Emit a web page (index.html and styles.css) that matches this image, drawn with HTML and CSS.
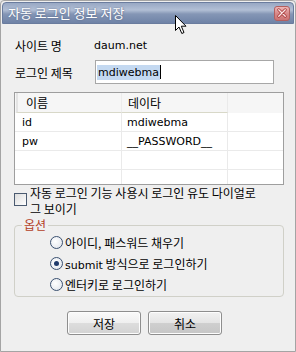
FILE: index.html
```html
<!DOCTYPE html>
<html>
<head>
<meta charset="utf-8">
<link rel="stylesheet" href="styles.css">
</head>
<body>
<div class="window">
  <div class="titlebar">
    <span class="title">자동 로그인 정보 저장</span>
    <span class="close">
      <svg width="15" height="14" viewBox="0 0 15 14"><path d="M4 3.5 L11 10.5 M11 3.5 L4 10.5" stroke="#a83a3a" stroke-width="3.2" stroke-linecap="round"/><path d="M4 3.5 L11 10.5 M11 3.5 L4 10.5" stroke="#fbe6e6" stroke-width="1.4" stroke-linecap="round"/></svg>
    </span>
  </div>
  <div class="content">
    <div class="row row-site">
      <span class="label">사이트 명</span>
      <span class="value">daum.net</span>
    </div>
    <div class="row row-title">
      <span class="label">로그인 제목</span>
      <div class="input"><span class="sel">mdiwebma</span><span class="caret"></span></div>
    </div>
    <div class="list">
      <div class="lrow head">
        <div class="c1"><span>이름</span></div>
        <div class="c2"><span>데이타</span></div>
        <div class="c3"></div>
      </div>
      <div class="lrow">
        <div class="c1">id</div>
        <div class="c2">mdiwebma</div>
        <div class="c3"></div>
      </div>
      <div class="lrow">
        <div class="c1">pw</div>
        <div class="c2">__PASSWORD__</div>
        <div class="c3"></div>
      </div>
      <div class="lrow">
        <div class="c1"></div>
        <div class="c2"></div>
        <div class="c3"></div>
      </div>
      <div class="lrow last">
        <div class="c1"></div>
        <div class="c2"></div>
        <div class="c3"></div>
      </div>
    </div>
    <div class="check">
      <span class="box"></span>
      <span class="ctext">자동 로그인 기능 사용시 로그인 유도 다이얼로<br>그 보이기</span>
    </div>
    <fieldset class="group">
      <legend>옵션</legend>
      <div class="radio"><span class="dot"></span><span>아이디, 패스워드 채우기</span></div>
      <div class="radio"><span class="dot on"></span><span><span class="lat">submit</span> 방식으로 로그인하기</span></div>
      <div class="radio"><span class="dot"></span><span>엔터키로 로그인하기</span></div>
    </fieldset>
    <div class="buttons">
      <div class="btn">저장</div>
      <div class="btn alt">취소</div>
    </div>
  </div>
  <svg class="cursor" width="13" height="20" viewBox="0 0 13 20"><path d="M0.5 0.5 L0.5 15.5 L4 12 L6.8 18.5 L9 17.5 L6.3 11.2 L11 11.2 Z" fill="#fff" stroke="#000" stroke-width="1"/></svg>
</div>
</body>
</html>
```
FILE: styles.css
```css
* { box-sizing: border-box; }
html, body { margin: 0; padding: 0; }
body {
  width: 296px; height: 352px; overflow: hidden;
  font-family: "Noto Sans CJK KR", "Noto Sans", sans-serif;
  font-size: 12px; color: #000;
  background: #e8e8e8;
}
.window {
  position: relative;
  width: 296px; height: 352px;
  background: #efefef;
  border: 1px solid #a4a4a4;
  border-radius: 4px 4px 0 0;
}
.titlebar {
  margin: 1px 1px 0 1px;
  height: 22px;
  border-radius: 4px 4px 0 0;
  background: linear-gradient(#98a8c4, #b2bfd5 35%, #8596b5 55%, #6f83a7);
  border: 1px solid #6a7c9e;
  display: flex; align-items: center; justify-content: space-between;
  padding: 0 3px 0 5px;
}
.title {
  color: #fff; font-size: 13px; line-height: 16px;
  text-shadow: 0 0 2px #506080;
}
.close {
  width: 16px; height: 15px;
  border: 1px solid #b35f5f; border-radius: 3px;
  background: linear-gradient(#efb7b7, #d88888 50%, #cc7474);
  display: flex; align-items: center; justify-content: center;
}
.close svg { display: block; }
.content { padding: 12px 12px 0 13px; }
.row { display: flex; align-items: center; }
.row-site { height: 18px; }
.label { width: 80px; padding-left: 1px; }
.value { font-family: "DejaVu Sans", sans-serif; font-size: 11px; }
.row-title { margin-top: 6px; height: 24px; }
.input {
  width: 179px; height: 24px; margin-left: 1px;
  background: #fff; border: 1px solid #a7a7a7;
  display: flex; align-items: center; padding-left: 1px;
  font-family: "DejaVu Sans", sans-serif; font-size: 11px;
}
.sel { background: #c4d9f1; line-height: 15px; padding: 0 1px; }
.caret { width: 1px; height: 14px; background: #000; }
.list {
  margin-top: 8px;
  width: 270px; height: 93px;
  background: #fff;
  border: 1px solid #9e9e9e;
  overflow: hidden;
}
.lrow { display: flex; height: 19px; border-bottom: 1px solid #eaeaea; }
.lrow.last { border-bottom: none; }
.lrow > div { display: flex; align-items: center; }
.c1 { width: 107px; padding-left: 7px; border-right: 1px solid #eaeaea; }
.c2 { width: 106px; padding-left: 5px; border-right: 1px solid #eaeaea; }
.c3 { flex: 1; }
.lrow:not(.head) { font-family: "DejaVu Sans", sans-serif; font-size: 11px; }
.lrow.head { height: 20px; background: #f6f6f6; border-bottom: none; font-size: 12px; }
.lrow.head .c1 { border-left: 2px solid #e4e4e4; padding-left: 8px; border-right: 1px solid #ececec; border-bottom: 1px solid #d8d8c8; margin-left: 1px; width: 106px; }
.lrow.head .c2 { border-bottom: 1px solid #d8d8c8; padding-left: 6px; }
.check { display: flex; margin-top: 0; }
.box {
  width: 13px; height: 13px; margin-top: 8px; margin-right: 3px; flex: none;
  border: 1px solid #4a5a70; background: linear-gradient(135deg, #dcdcdc, #fff);
}
.ctext { font-size: 12px; line-height: 16px; }
.group {
  margin: 1px 0 0 0; width: 270px; height: 79px;
  border: 1px solid #d0d0c8; border-radius: 4px;
  padding: 0;
}
.group legend { color: #b3401f; padding: 0 2px; margin-left: 7px; line-height: 14px; font-size: 12px; }
.radio { display: flex; align-items: center; height: 20px; margin-bottom: 1px; padding-left: 35px; }
.dot {
  width: 13px; height: 13px; border-radius: 50%; flex: none;
  border: 1px solid #3a5070;
  background: radial-gradient(circle at 40% 40%, #fff, #dde2ea);
  margin-right: 2px;
  display: flex; align-items: center; justify-content: center;
}
.dot.on::after { content: ""; width: 5px; height: 5px; border-radius: 50%; background: #1f3a6b; }
.lat { font-family: "DejaVu Sans", sans-serif; font-size: 11px; }
.buttons { display: flex; justify-content: center; gap: 7px; margin-top: 14px; padding-right: 8px; }
.btn {
  width: 74px; height: 24px;
  border: 1px solid #8e8e8e; border-radius: 3px;
  background: linear-gradient(#fafafa, #efefef 50%, #dddddd 51%, #d3d3d3);
  display: flex; align-items: center; justify-content: center;
  box-shadow: inset 0 0 0 1px #fdfdfd;
}
.btn.alt { background: linear-gradient(#f2f2f2, #e4e4e4 50%, #cfcfcf 51%, #c6c6c6); }
.cursor { position: absolute; left: 174px; top: 14px; }
```
